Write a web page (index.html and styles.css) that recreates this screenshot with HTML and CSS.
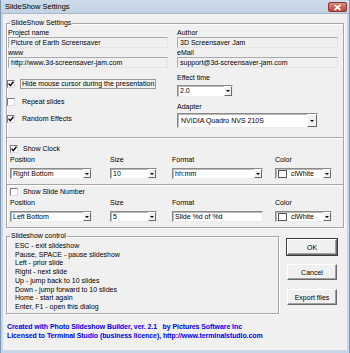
FILE: index.html
```html
<!DOCTYPE html>
<html lang="en">
<head>
  <meta charset="UTF-8" />
  <title>SlideShow Settings</title>
  <link rel="stylesheet" href="styles.css">
</head>
<body>

  <div class="window">
    <div class="titlebar">
      <span class="title">SlideShow Settings</span>
      <span class="close">
        <svg width="9" height="7" viewBox="0 0 9 7"><path d="M1.5 0.8 L7.5 6.2 M7.5 0.8 L1.5 6.2" stroke="#fff" stroke-width="1.6"/></svg>
      </span>
    </div>

    <div class="client">
      <div class="group settings">
        <span class="group-title">SlideShow Settings</span>

        <div class="top">
          <div class="col">
            <div class="lbl">Project name</div>
            <div class="field">Picture of Earth Screensaver</div>
            <div class="lbl">www</div>
            <div class="field">http://www.3d-screensaver-jam.com</div>

            <div class="checks">
              <div class="check">
                <span class="box on"></span>
                <span class="text focus">Hide mouse cursor during the presentation</span>
              </div>
              <div class="check">
                <span class="box"></span>
                <span class="text">Repeat slides</span>
              </div>
              <div class="check">
                <span class="box on"></span>
                <span class="text">Random Effects</span>
              </div>
            </div>
          </div>

          <div class="col">
            <div class="lbl">Author</div>
            <div class="field">3D Screensaver Jam</div>
            <div class="lbl">eMail</div>
            <div class="field">support@3d-screensaver-jam.com</div>

            <div class="lbl gap">Effect time</div>
            <div class="combo effect"><span class="value">2.0</span><span class="arrow"></span></div>
            <div class="lbl gap">Adapter</div>
            <div class="combo adapter"><span class="value">NVIDIA Quadro NVS 210S</span><span class="arrow"></span></div>
          </div>
        </div>

        <div class="section clock">
          <div class="check">
            <span class="box on"></span>
            <span class="text">Show Clock</span>
          </div>
          <div class="opts">
            <div>
              <div class="lbl">Position</div>
              <div class="combo w-pos"><span class="value">Right Bottom</span><span class="arrow"></span></div>
            </div>
            <div>
              <div class="lbl">Size</div>
              <div class="combo w-size"><span class="value">10</span><span class="arrow"></span></div>
            </div>
            <div>
              <div class="lbl">Format</div>
              <div class="combo w-format"><span class="value">hh:mm</span><span class="arrow"></span></div>
            </div>
            <div>
              <div class="lbl">Color</div>
              <div class="combo w-color"><span class="swatch"></span><span class="value">clWhite</span><span class="arrow"></span></div>
            </div>
          </div>
        </div>

        <div class="section slidenum">
          <div class="check">
            <span class="box"></span>
            <span class="text">Show Slide Number</span>
          </div>
          <div class="opts">
            <div>
              <div class="lbl">Position</div>
              <div class="combo w-pos"><span class="value">Left Bottom</span><span class="arrow"></span></div>
            </div>
            <div>
              <div class="lbl">Size</div>
              <div class="combo w-size"><span class="value">5</span><span class="arrow"></span></div>
            </div>
            <div>
              <div class="lbl">Format</div>
              <div class="combo w-format"><span class="value">Slide %d of %d</span></div>
            </div>
            <div>
              <div class="lbl">Color</div>
              <div class="combo w-color"><span class="swatch"></span><span class="value">clWhite</span><span class="arrow"></span></div>
            </div>
          </div>
        </div>
      </div>

      <div class="bottom">
        <div class="group control">
          <span class="group-title">Slideshow control</span>
          <div>ESC - exit slideshow</div>
          <div>Pause, SPACE - pause slideshow</div>
          <div>Left - prior slide</div>
          <div>Right - next slide</div>
          <div>Up - jump back to 10 slides</div>
          <div>Down - jump forward to 10 slides</div>
          <div>Home - start again</div>
          <div>Enter, F1 - open this dialog</div>
        </div>

        <div class="buttons">
          <button class="default">OK</button>
          <button>Cancel</button>
          <button>Export files</button>
        </div>
      </div>

      <div class="footer">
        <div>Created with Photo Slideshow Builder, ver. 2.1&nbsp;&nbsp;&nbsp;by Pictures Software Inc</div>
        <div>Licensed to Terminal Studio (business licence), http://www.terminalstudio.com</div>
      </div>
    </div>
  </div>

</body>
</html>
```

FILE: styles.css
```css
    * {
      box-sizing: border-box;
    }

    body {
      margin: 0;
      padding: 0;
      font-family: "Liberation Sans", Arial, sans-serif;
      font-size: 7px;
      line-height: 8px;
      color: #000;
      background: #3a7096;
    }

    .window {
      width: 350px;
      height: 353px;
      display: flex;
      flex-direction: column;
      background: #c8d7e7;
      border-left: 1px solid #7f97b0;
      border-right: 1px solid #7f97b0;
    }

    .titlebar {
      height: 14px;
      display: flex;
      align-items: center;
      justify-content: space-between;
      padding: 0 2px 0 4px;
      background: linear-gradient(#cddbea, #c2d2e3);
      border-bottom: 1px solid #a9b9ca;
    }

    .title {
      font-size: 7.5px;
    }

    .close {
      width: 19px;
      height: 10px;
      margin-top: 1px;
      display: flex;
      align-items: center;
      justify-content: center;
      background: linear-gradient(#d98a80, #c2453a);
      border: 1px solid #8b3a33;
      border-radius: 2px;
    }

    .client {
      flex: 1;
      margin: 0 2px 3px 2px;
      background: #f0f0f0;
      padding: 0 3px 0 3px;
    }

    /* etched group boxes */
    .group {
      position: relative;
      border: 1px solid #a6a6a6;
      box-shadow: inset 1px 1px 0 #fff, 1px 1px 0 #fff;
    }

    .group-title {
      position: absolute;
      top: -5px;
      left: 3px;
      padding: 0 1px;
      background: #f0f0f0;
    }

    .settings {
      margin-top: 9px;
    }

    .top {
      height: 113px;
      display: grid;
      grid-template-columns: 160px 161px;
      column-gap: 9px;
      padding: 5px 4px 0 1px;
    }

    .lbl {
      height: 8px;
      white-space: nowrap;
    }

    .lbl.gap {
      margin-top: 6px;
    }

    .field {
      height: 11px;
      margin-bottom: 1px;
      padding-left: 2px;
      line-height: 9px;
      background: #f0f0f0;
      border: 1px solid;
      border-color: #ababab #e4e4e4 #e4e4e4 #ababab;
      white-space: nowrap;
    }

    .checks {
      margin-top: 11px;
      margin-left: -1px;
      display: flex;
      flex-direction: column;
      gap: 7.5px;
    }

    .check {
      height: 10px;
      display: flex;
      align-items: center;
    }

    .box {
      width: 8px;
      height: 8px;
      flex: none;
      background: #fff;
      border: 1px solid;
      border-color: #7a7a7a #dcdcdc #dcdcdc #7a7a7a;
    }

    .box.on {
      background: #fff url("data:image/svg+xml,%3Csvg xmlns='http://www.w3.org/2000/svg' width='6' height='6'%3E%3Cpath d='M0.6 2.6 L2.3 4.6 L5.5 0.8' fill='none' stroke='%23000' stroke-width='1.4'/%3E%3C/svg%3E") center / 6px 6px no-repeat;
    }

    .check .text {
      margin-left: 5px;
      padding: 0 1px;
      border: 1px solid transparent;
      line-height: 8px;
      white-space: nowrap;
    }

    .check .text.focus {
      border-color: #9a9a9a;
    }

    /* combo boxes */
    .combo {
      display: flex;
      align-items: stretch;
      height: 11px;
      background: #fff;
      border: 1px solid;
      border-color: #8a8a8a #ececec #ececec #8a8a8a;
      box-shadow: inset 1px 1px 0 #b8b8b8;
    }

    .combo .value {
      flex: 1;
      padding-left: 2px;
      line-height: 9px;
      white-space: nowrap;
      overflow: hidden;
    }

    .combo .arrow {
      width: 8px;
      margin: 0 0 0 auto;
      flex: none;
      background: #f0f0f0;
      border: 1px solid;
      border-color: #fff #6a6a6a #6a6a6a #fff;
      display: flex;
      align-items: center;
      justify-content: center;
    }

    .combo .arrow::after {
      content: "";
      border-left: 2px solid transparent;
      border-right: 2px solid transparent;
      border-top: 2px solid #000;
    }

    .combo.effect {
      width: 56px;
      height: 12px;
      margin-top: 3px;
    }

    .combo.adapter {
      width: 141px;
      height: 15px;
      margin-top: 2px;
    }

    .combo.adapter .value {
      line-height: 13px;
      padding-left: 3px;
    }

    .combo.adapter .arrow {
      width: 10px;
    }

    .w-pos { width: 82px; }
    .w-size { width: 47px; }
    .w-format { width: 91px; }
    .w-color { width: 57px; }

    .swatch {
      width: 9px;
      height: 8px;
      margin: 0 2px 0 2px;
      align-self: center;
      flex: none;
      background: #fff;
      border: 1px solid #555;
    }

    /* clock / slide number rows */
    .section {
      border-top: 1px solid #a6a6a6;
      box-shadow: inset 0 1px 0 #fff;
      padding-left: 3px;
    }

    .section .check {
      height: 9px;
    }

    .section .check .text {
      margin-left: 3px;
    }

    .clock {
      height: 47px;
      padding-top: 6px;
    }

    .slidenum {
      height: 43px;
      padding-top: 2px;
    }

    .opts {
      display: grid;
      grid-template-columns: 100px 62px 103px 57px;
      margin-top: 3px;
    }

    .opts .lbl {
      height: 12px;
    }

    /* bottom area */
    .bottom {
      display: flex;
      margin-top: 8px;
    }

    .control {
      width: 273px;
      height: 78px;
      padding: 5px 0 0 8px;
      line-height: 8.7px;
    }

    .buttons {
      margin-left: 8px;
      padding-top: 3px;
      display: flex;
      flex-direction: column;
      gap: 9px;
    }

    button {
      width: 50px;
      height: 16px;
      padding: 0;
      font-family: "Liberation Sans", Arial, sans-serif;
      font-size: 7px;
      color: #000;
      background: #f0f0f0;
      border: 1px solid;
      border-color: #fff #696969 #696969 #fff;
      box-shadow: inset -1px -1px 0 #a0a0a0;
    }

    button.default {
      outline: 1px solid #3c3c3c;
    }

    .footer {
      margin-top: 8px;
      padding-left: 1px;
      font-weight: bold;
      color: #0000f0;
      line-height: 9px;
      letter-spacing: -0.08px;
      white-space: nowrap;
    }
```
